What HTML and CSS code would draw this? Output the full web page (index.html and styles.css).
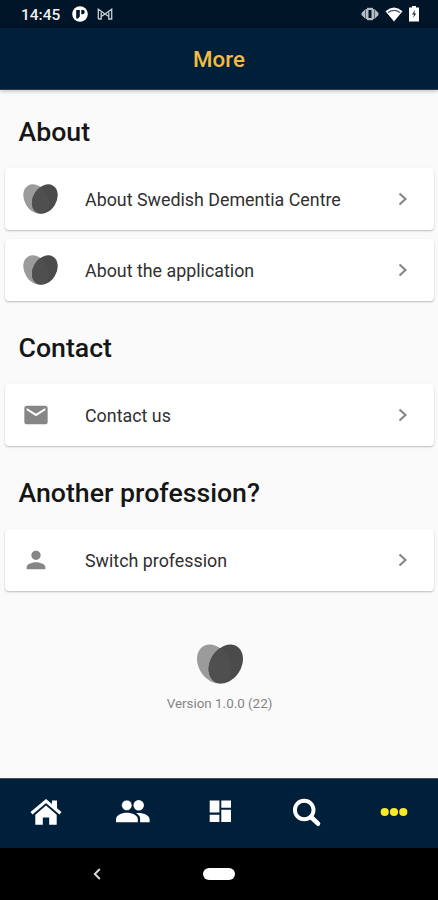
FILE: index.html
```html
<!DOCTYPE html>
<html lang="en">
<head>
<meta charset="utf-8">
<title>More</title>
<link rel="stylesheet" href="styles.css">
</head>
<body>
<svg class="defs" width="0" height="0" aria-hidden="true">
  <clipPath id="right-leaf"><ellipse cx="28.800" cy="20" rx="15.500" ry="20.900" transform="rotate(32 28.800 20)"/></clipPath>
  <symbol id="heart" viewBox="0 0 46 40">
    <ellipse cx="17.200" cy="20" rx="15.500" ry="20.900" transform="rotate(-32 17.200 20)" fill="#9b9b9b"/>
    <ellipse cx="28.800" cy="20" rx="15.500" ry="20.900" transform="rotate(32 28.800 20)" fill="#4b4b4b"/>
    <g clip-path="url(#right-leaf)"><ellipse cx="17.200" cy="20" rx="15.500" ry="20.900" transform="rotate(-32 17.200 20)" fill="#4f4f4f"/></g>
  </symbol>
  <symbol id="chevron" viewBox="0 0 12 16"><path d="M2.500 2.500 8.500 8l-6 5.500" fill="none" stroke="#858585" stroke-width="2.1"/></symbol>
</svg>
<div class="screen">
  <header class="status">
    <span class="time">14:45</span>
    <svg class="app-icon" width="16" height="16" viewBox="0 0 16 16"><circle cx="8" cy="8" r="7.800" fill="#fff"/><path d="M4.200 12.500V4h3.600v6.500l-1.800 2zM9.300 4h1.500c1.500 0 1.900.8 1.900 2s-.6 2.300-1.900 2.300H9.300z" fill="#001528"/></svg>
    <svg class="mail-icon" width="16" height="12" viewBox="0 0 16 12"><path d="M1.300 11V1.200L8 6l6.700-4.800V11h-2.900V4.500M4.200 4.500V11H1.300M4.200 8.500 8 6l3.800 2.500" fill="none" stroke="#c9ced4" stroke-width="1.300"/></svg>
    <span class="spacer"></span>
    <svg class="vibrate" width="18" height="14" viewBox="0 0 18 14"><path d="M4.500 2h9v10h-9zM4 2.500v9L.5 8V6zM14 2.500v9L17.500 8V6z" fill="#b6bcc4"/><path d="M6 .8h6v12.400H6z" fill="#b6bcc4"/><path d="M7.500 3h3v8h-3z" fill="#001528"/></svg>
    <svg class="wifi" width="18" height="15" viewBox="0 0 18 15"><path d="M.5 4.200Q9-3 17.500 4.200L9 14.500z" fill="#fff"/><path d="M3 5.500Q9 1.200 15 5.500" fill="none" stroke="#465563" stroke-width="1.200"/></svg>
    <svg class="battery" width="10" height="16" viewBox="0 0 10 16"><path d="M3 0h4v1.500h3v14H0v-14h3z" fill="#fff"/><path d="m6 4-3 4.500h2L4.200 12l3-4.500H5.400z" fill="#26323e"/></svg>
  </header>
  <div class="appbar"><h1>More</h1></div>
  <main>
    <h2>About</h2>
    <a class="card"><span class="lead"><svg class="heart" width="35" height="30"><use href="#heart"/></svg></span><span class="label">About Swedish Dementia Centre</span><svg width="12" height="16"><use href="#chevron"/></svg></a>
    <a class="card"><span class="lead"><svg class="heart" width="35" height="30"><use href="#heart"/></svg></span><span class="label">About the application</span><svg width="12" height="16"><use href="#chevron"/></svg></a>
    <h2>Contact</h2>
    <a class="card"><span class="lead"><svg width="28" height="28" viewBox="0 0 24 24"><path fill="#868686" d="M20 4H4c-1.100 0-1.990.9-1.990 2L2 18c0 1.100.9 2 2 2h16c1.100 0 2-.9 2-2V6c0-1.100-.9-2-2-2zm0 4l-8 5-8-5V6l8 5 8-5v2z"/></svg></span><span class="label">Contact us</span><svg width="12" height="16"><use href="#chevron"/></svg></a>
    <h2>Another profession?</h2>
    <a class="card"><span class="lead"><svg width="28" height="28" viewBox="0 0 24 24"><path fill="#868686" d="M12 12c2.210 0 4-1.790 4-4s-1.790-4-4-4-4 1.790-4 4 1.790 4 4 4zm0 2c-2.670 0-8 1.340-8 4v2h16v-2c0-2.660-5.330-4-8-4z"/></svg></span><span class="label">Switch profession</span><svg width="12" height="16"><use href="#chevron"/></svg></a>
    <div class="about">
      <svg width="46" height="40"><use href="#heart"/></svg>
      <p>Version 1.0.0 (22)</p>
    </div>
  </main>
  <nav class="tabs">
    <a><svg width="32" height="28" viewBox="30 798 32 28"><path d="M31.500 813.300 46 801l14.500 12.300" fill="none" stroke="#fff" stroke-width="3.100"/><path d="M52 800.500h5v9l-5-4.200zM46 805.500l10.700 9.200v10.100h-7.500v-7.300h-6.400v7.300h-7.500v-10.100z" fill="#fff"/></svg></a>
    <a><svg width="36" height="28" viewBox="114 798 36 28"><g fill="#fff"><circle cx="137.700" cy="805.300" r="5.200"/><path d="M135 813.200c6.500-1 13.600 2 13.600 6v3h-9.500v-3.500c0-2.300-1.500-4.200-4.100-5.500z"/></g><circle cx="125.800" cy="805.300" r="5.200" fill="#fff" stroke="#001f3b" stroke-width=".6"/><path d="M115 822.200v-3c0-4 5.500-6.500 10.800-6.500s11 2.500 11 6.500v3z" fill="#fff"/></svg></a>
    <a><svg width="24" height="28" viewBox="207 798 24 28"><path d="M208.700 800.500h9.700v12.100h-9.700zM208.700 814.800h9.700v7.200h-9.700zM220.300 800.500h9.700v7.200h-9.700zM220.300 809.800h9.700V822h-9.700z" fill="#fff"/></svg></a>
    <a><svg width="30" height="30" viewBox="292 797 30 30"><circle cx="304.200" cy="810" r="9.300" fill="none" stroke="#fff" stroke-width="3.900"/><path d="m311 817 7 6.700" stroke="#fff" stroke-width="4.600" stroke-linecap="round"/></svg></a>
    <a><svg width="28" height="10" viewBox="0 0 28 10"><g fill="#f8e825"><circle cx="4.700" cy="5" r="4.100"/><circle cx="14" cy="5" r="4.100"/><circle cx="23.300" cy="5" r="4.100"/></g></svg></a>
  </nav>
  <footer class="system">
    <svg class="back" width="10" height="14" viewBox="0 0 10 14"><path d="M7.800 2 2.800 7l5 5" fill="none" stroke="#ddd" stroke-width="1.900"/></svg>
    <span class="pill"></span>
    <span></span>
  </footer>
</div>
</body>
</html>
```
FILE: styles.css
```css
* { box-sizing: border-box; }
body { margin: 0; font-family: Roboto, sans-serif; background: #fafafa; }
svg { display: block; flex: none; }
.defs { position: absolute; }
.screen { height: 900px; display: flex; flex-direction: column; overflow: hidden; }

.status { height: 28px; background: #001528; display: flex; align-items: center; padding: 0 19px 0 21px; flex: none; }
.time { color: #eef0f2; font-size: 15.500px; font-weight: 500; line-height: 28px; width: 51px; padding-top: 2px; }
.mail-icon { margin-left: 9px; }
.spacer { flex: 1; }
.wifi { margin: 0 6px 0 6px; }

.appbar { height: 62px; flex: none; background: #001f3b; border-bottom: 1px solid #38364c; box-shadow: 0 1px 4px rgba(0,0,0,.25); display: flex; align-items: center; justify-content: center; }
.appbar h1 { margin: 0; font-size: 22.300px; line-height: 26px; font-weight: 500; color: #f0bd42; }

main { flex: 1; padding: 0 4px 0 5px; }
h2 { margin: 0; font-size: 26.700px; line-height: 32px; font-weight: 500; color: #161616; padding: 26px 13.500px 20px; height: 78px; }
.card + h2 { padding-top: 31px; height: 83px; }
.card { display: flex; align-items: center; height: 62px; background: #fff; border-radius: 4px; padding: 0 25px 0 18px; box-shadow: 0 1px 2px rgba(0,0,0,.26); }
.card + .card { margin-top: 9px; }
.lead { width: 62px; }
.lead > svg { margin-left: -1px; }
.lead > .heart { margin-left: 0; }
.label { flex: 1; font-size: 17.850px; line-height: 24px; color: #303030; padding-top: 1px; }

.about { display: flex; flex-direction: column; align-items: center; padding-top: 53px; }
.about p { margin: 11px 0 0; font-size: 13.400px; line-height: 18px; color: #858585; }

.tabs { height: 70px; flex: none; background: #001f3b; border-top: 1px solid #46505d; display: grid; grid-template-columns: repeat(5, 1fr); place-items: center; padding: 0 1px 3px 2px; }
.system { height: 52px; flex: none; background: #000; display: grid; grid-template-columns: 1fr 32px 1fr; align-items: center; }
.back { margin-left: 92px; }
.pill { height: 12px; border-radius: 6px; background: #fff; }
```
